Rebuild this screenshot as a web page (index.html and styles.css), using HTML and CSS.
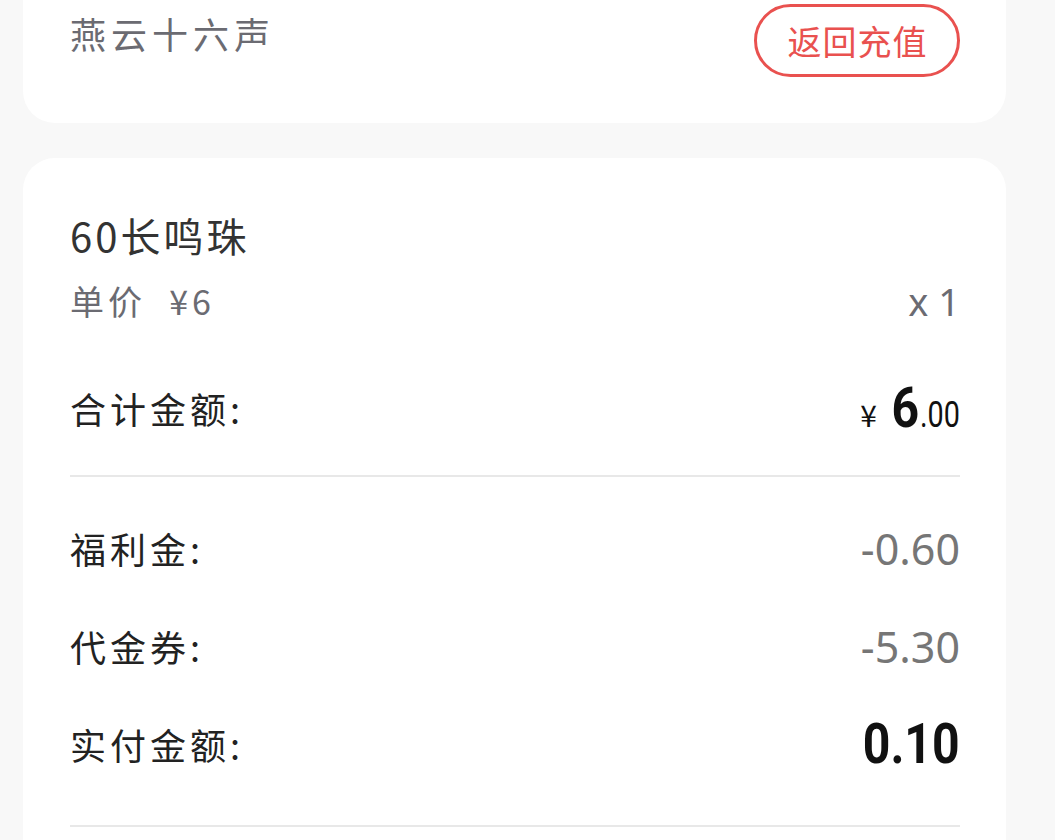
FILE: index.html
```html
<!DOCTYPE html>
<html lang="zh-CN">
<head>
<meta charset="utf-8">
<title>订单确认</title>
<link rel="stylesheet" href="styles.css">
</head>
<body>
<div class="page">
  <section class="card card-top">
    <div class="top-row">
      <div class="game-name">燕云十六声</div>
      <button class="back-btn">返回充值</button>
    </div>
  </section>

  <section class="card card-order">
    <div class="product-title">60长鸣珠</div>
    <div class="price-row">
      <span class="unit-price">单价&nbsp;&nbsp;¥6</span>
      <span class="qty">x 1</span>
    </div>

    <div class="row">
      <span class="label">合计金额:</span>
      <span class="total"><span class="yen">¥</span><span class="int">6</span><span class="dec">.00</span></span>
    </div>
    <div class="divider"></div>

    <div class="row">
      <span class="label">福利金:</span>
      <span class="minus">-0.60</span>
    </div>
    <div class="row">
      <span class="label">代金券:</span>
      <span class="minus">-5.30</span>
    </div>
    <div class="row">
      <span class="label">实付金额:</span>
      <span class="paid">0.10</span>
    </div>
    <div class="divider divider-last"></div>
  </section>
</div>
</body>
</html>
```

FILE: styles.css
```css
html, body {
  margin: 0;
  padding: 0;
  background: #f8f8f8;
}

body {
  font-family: "Noto Sans CJK SC", "Noto Sans", sans-serif;
  height: 840px;
  overflow: hidden;
}

.page {
  padding-left: 23px;
  width: 983px;
}

.card {
  background: #ffffff;
  border-radius: 32px;
  padding-left: 47px;
  padding-right: 46px;
}

.card-top {
  margin-top: -40px;
  padding-top: 44px;
  padding-bottom: 46px;
}

.top-row {
  display: flex;
  justify-content: space-between;
  align-items: flex-start;
}

.game-name {
  font-size: 36px;
  line-height: 36px;
  letter-spacing: 5px;
  color: #6b6b72;
  margin-top: 11px;
}

.back-btn {
  box-sizing: border-box;
  width: 206px;
  height: 73px;
  border: 3px solid #e9514f;
  border-radius: 40px;
  background: #fff;
  color: #e9514f;
  font-family: "Noto Sans CJK SC", sans-serif;
  font-size: 34px;
  line-height: 1;
  letter-spacing: 1px;
  padding: 0 0 0 1px;
  display: flex;
  align-items: center;
  justify-content: center;
}

.card-order {
  margin-top: 35px;
  padding-top: 57px;
  padding-bottom: 40px;
}

.product-title {
  font-size: 40px;
  line-height: 40px;
  letter-spacing: 3px;
  color: #333333;
}

.price-row {
  display: flex;
  justify-content: space-between;
  align-items: center;
  margin-top: 28px;
  height: 36px;
  color: #6b6b72;
}

.unit-price {
  font-size: 34px;
  line-height: 36px;
  letter-spacing: 4px;
}

.qty {
  font-size: 38px;
  line-height: 36px;
  font-family: "Noto Sans", sans-serif;
  font-weight: 400;
}

.row {
  display: flex;
  justify-content: space-between;
  align-items: center;
  height: 98px;
}

.price-row + .row {
  margin-top: 40px;
}

.label {
  font-size: 36px;
  letter-spacing: 4px;
  color: #222222;
}

.total {
  display: flex;
  align-items: baseline;
  color: #111111;
  font-family: Roboto, sans-serif;
}

.yen {
  font-family: "Noto Sans CJK SC", sans-serif;
  font-size: 30px;
  margin-right: 10px;
}

.int {
  font-size: 56px;
  font-weight: 700;
  display: inline-block;
  transform: scaleX(0.86);
  transform-origin: right center;
  margin-right: -3px;
}

.dec {
  font-size: 36px;
  display: inline-block;
  transform: scaleX(0.8);
  transform-origin: right center;
  margin-left: -6px;
}

.minus {
  font-family: "Noto Sans", sans-serif;
  font-weight: 400;
  font-size: 43px;
  color: #767676;
}

.paid {
  font-family: Roboto, sans-serif;
  font-size: 56px;
  font-weight: 700;
  color: #111111;
  display: inline-block;
  transform: scaleX(0.86);
  transform-origin: right center;
}

.divider {
  height: 2px;
  background: #e8e8e8;
  margin-top: 18px;
  margin-bottom: 22px;
}

.divider-last {
  margin-top: 32px;
}
```
